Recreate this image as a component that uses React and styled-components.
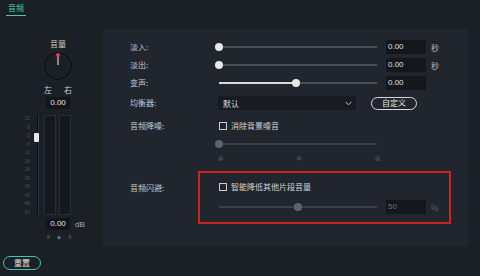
import React from 'react';
import styled, { createGlobalStyle } from 'styled-components';

const GlobalStyle = createGlobalStyle`
    html, body {
        margin: 0;
        padding: 0;
        background: #1b1f26;
    }
    * { box-sizing: border-box; }
`;

const Screen = styled.div`
    width: 480px;
    height: 276px;
    background: #1b1f26;
    font-family: "Noto Sans CJK SC", "Noto Sans", sans-serif;
    font-size: 8px;
    color: #c9ccd1;
    display: flex;
    flex-direction: column;
    overflow: hidden;
`;

const TabBar = styled.div`
    height: 20px;
    padding-left: 6px;
    display: flex;
    align-items: flex-start;
`;

const Tab = styled.div`
    margin-top: 3px;
    padding: 0 2px 2px;
    color: #4ec9ac;
    line-height: 10px;
    border-bottom: 1px solid #4ec9ac;
`;

const Main = styled.div`
    display: flex;
    padding-top: 9px;
    height: 226px;
`;

const LeftCol = styled.div`
    width: 103px;
    display: flex;
    flex-direction: column;
    align-items: flex-start;
    padding: 10px 0 0 12px;
`;

const Centered = styled.div`
    width: 92px;
    margin-left: -12px;
    display: flex;
    flex-direction: column;
    align-items: center;
    padding-left: 24px;
`;

const Caption = styled.div`
    line-height: 10px;
`;

const LR = styled.div`
    display: flex;
    gap: 12px;
    line-height: 10px;
    margin-top: 4px;
`;

const SmallBox = styled.div`
    width: 24px;
    height: 12px;
    background: #121519;
    color: #e2e4e7;
    line-height: 12px;
    text-align: center;
    font-family: "Liberation Sans", sans-serif;
    font-size: 8px;
`;

const Meter = styled.div`
    margin-top: 6px;
    display: flex;
    align-items: stretch;
    height: 100px;
`;

const Scale = styled.div`
    width: 18px;
    display: flex;
    flex-direction: column;
    justify-content: space-between;
    align-items: flex-end;
    font-family: "Liberation Sans", sans-serif;
    font-size: 5px;
    color: #4b5058;
    line-height: 6px;
`;

const Fader = styled.div`
    width: 14px;
    position: relative;
    display: flex;
    justify-content: center;
    &::before {
        content: '';
        width: 1px;
        background: #0b0d10;
        box-shadow: 1px 0 0 #2f343c;
    }
`;

const FaderThumb = styled.div`
    position: absolute;
    top: 18px;
    left: 4px;
    width: 5px;
    height: 9px;
    background: #e8e8e8;
    border-radius: 1px;
`;

const Bar = styled.div`
    width: 12px;
    margin-right: 3px;
    background: #15181d;
    border: 1px solid #2a2f37;
`;

const DbRow = styled.div`
    margin-top: 3px;
    display: flex;
    align-items: center;
    gap: 5px;
    padding-left: 34px;
`;

const Unit = styled.span`
    color: #a8acb2;
    font-family: "Liberation Sans", sans-serif;
    font-size: 8px;
`;

const PanRow = styled.div`
    margin-top: 4px;
    padding-left: 35px;
    display: flex;
    gap: 7px;
    font-size: 5px;
    color: #6b7078;
    font-family: "Liberation Sans", sans-serif;
`;

const Panel = styled.div`
    width: 365px;
    height: 217px;
    background: #21262e;
    padding: 9px 0 0 27px;
    display: flex;
    flex-direction: column;
`;

const Row = styled.div`
    display: grid;
    grid-template-columns: 88px 1fr;
    align-items: center;
    height: ${p => p.$h || 18}px;
    margin-top: ${p => p.$top || 0}px;
`;

const Label = styled.div`
    color: #c4c7cc;
    line-height: 10px;
`;

const Controls = styled.div`
    display: flex;
    align-items: center;
`;

const Track = styled.div`
    position: relative;
    width: 158px;
    height: 2px;
    background: ${p => p.$dim ? '#3b4048' : '#4a4f57'};
    margin-left: 1px;
`;

const Fill = styled.div`
    position: absolute;
    left: 0;
    top: 0;
    height: 2px;
    background: #d7d9dc;
`;

const Thumb = styled.div`
    position: absolute;
    top: -3px;
    width: 8px;
    height: 8px;
    margin-left: -4px;
    border-radius: 50%;
    background: ${p => p.$dim ? '#5e636b' : '#e6e7e9'};
`;

const Field = styled.div`
    width: 40px;
    height: 14px;
    margin-left: 9px;
    background: #14171c;
    color: ${p => p.$dim ? '#6a6f77' : '#dfe1e4'};
    font-family: "Liberation Sans", sans-serif;
    font-size: 8px;
    line-height: 14px;
    padding-left: 2px;
`;

const Suffix = styled.span`
    margin-left: 5px;
    color: ${p => p.$dim ? '#5c6169' : '#b4b7bc'};
    font-family: "Noto Sans CJK SC", "Liberation Sans", sans-serif;
    font-size: 8px;
`;

const Select = styled.div`
    width: 138px;
    height: 14px;
    background: #181b21;
    display: flex;
    align-items: center;
    justify-content: space-between;
    padding: 0 4px 0 5px;
    color: #dcdee1;
`;

const PillButton = styled.button`
    margin-left: 15px;
    width: 46px;
    height: 13px;
    border: 1px solid #d6d8db;
    border-radius: 7px;
    background: transparent;
    color: #e4e6e9;
    font-family: inherit;
    font-size: 8px;
    line-height: 10px;
    padding: 0;
`;

const Check = styled.label`
    display: flex;
    align-items: center;
    gap: 4px;
    margin-left: 1px;
    color: #d0d3d7;
    line-height: 10px;
    &::before {
        content: '';
        width: 6px;
        height: 6px;
        border: 1px solid #c9ccd1;
    }
`;

const Marks = styled.div`
    width: 162px;
    display: flex;
    justify-content: space-between;
    font-size: 5px;
    color: #5b6068;
    line-height: 6px;
`;

const Highlight = styled.div`
    margin-left: -20px;
    width: 253px;
    height: 53px;
    border: 2px solid #c8261c;
    padding: 9px 0 0 18px;
    display: flex;
    flex-direction: column;
    gap: 8px;
`;

const Footer = styled.div`
    flex: 1;
    display: flex;
    align-items: flex-start;
    padding: 10px 0 0 3px;
`;

const ResetButton = styled.button`
    width: 38px;
    height: 14px;
    border: 1.5px solid #48c4a6;
    border-radius: 8px;
    background: transparent;
    color: #e2e4e7;
    font-family: inherit;
    font-size: 8px;
    line-height: 10px;
    padding: 0;
`;

const Knob = () => (
    <svg width="30" height="30" viewBox="0 0 30 30" style={{ marginTop: 2 }}>
        <circle cx="15" cy="15" r="13.5" fill="#1b1f26" stroke="#0c0e12" strokeWidth="1.5" />
        <circle cx="15" cy="15" r="14.5" fill="none" stroke="#2c3139" strokeWidth="0.6" />
        <line x1="15" y1="4" x2="15" y2="14" stroke="#e9c6cf" strokeWidth="1.2" />
        <circle cx="15" cy="4" r="2" fill="#e0375a" />
    </svg>
);

const Chevron = () => (
    <svg width="7" height="5" viewBox="0 0 7 5">
        <path d="M0.5 0.8 L3.5 3.8 L6.5 0.8" fill="none" stroke="#c0c3c8" strokeWidth="1" />
    </svg>
);

const Slider = ({ value, filled, dim }) => (
    <Track $dim={dim}>
        {filled && <Fill style={{ width: `${value}%` }} />}
        <Thumb $dim={dim} style={{ left: `${value}%` }} />
    </Track>
);

const scale = ['12', '6', '0', '-6', '-12', '-18', '-24', '-30', '-36', '-42', '-48', '-54'];

const App = () => {
    return (
        <Screen>
            <GlobalStyle />
            <TabBar>
                <Tab>音频</Tab>
            </TabBar>
            <Main>
                <LeftCol>
                    <Centered>
                        <Caption>音量</Caption>
                        <Knob />
                        <LR><span>左</span><span>右</span></LR>
                        <div style={{ marginTop: 2 }}><SmallBox>0.00</SmallBox></div>
                    </Centered>
                    <Meter>
                        <Scale>
                            {scale.map(s => <span key={s}>{s}</span>)}
                        </Scale>
                        <Fader><FaderThumb /></Fader>
                        <Bar />
                        <Bar />
                    </Meter>
                    <DbRow>
                        <SmallBox>0.00</SmallBox>
                        <Unit>dB</Unit>
                    </DbRow>
                    <PanRow>
                        <span>K</span><span>◆</span><span>X</span>
                    </PanRow>
                </LeftCol>
                <Panel>
                    <Row>
                        <Label>淡入:</Label>
                        <Controls>
                            <Slider value={0} />
                            <Field>0.00</Field>
                            <Suffix>秒</Suffix>
                        </Controls>
                    </Row>
                    <Row>
                        <Label>淡出:</Label>
                        <Controls>
                            <Slider value={0} />
                            <Field>0.00</Field>
                            <Suffix>秒</Suffix>
                        </Controls>
                    </Row>
                    <Row>
                        <Label>变声:</Label>
                        <Controls>
                            <Slider value={49} filled />
                            <Field>0.00</Field>
                        </Controls>
                    </Row>
                    <Row $top={2}>
                        <Label>均衡器:</Label>
                        <Controls>
                            <Select><span>默认</span><Chevron /></Select>
                            <PillButton>自定义</PillButton>
                        </Controls>
                    </Row>
                    <Row $top={5}>
                        <Label>音频降噪:</Label>
                        <Controls>
                            <Check>消除背景噪音</Check>
                        </Controls>
                    </Row>
                    <Row>
                        <span />
                        <Controls>
                            <Slider value={0} dim />
                        </Controls>
                    </Row>
                    <Row $h={10} $top={0}>
                        <span />
                        <Marks><span>弱</span><span>中</span><span>强</span></Marks>
                    </Row>
                    <Row $h={53} $top={8}>
                        <Label style={{ alignSelf: 'start', marginTop: 12 }}>音频闪避:</Label>
                        <Highlight>
                            <Check>智能降低其他片段音量</Check>
                            <Controls>
                                <Slider value={50} dim />
                                <Field $dim>50</Field>
                                <Suffix $dim>%</Suffix>
                            </Controls>
                        </Highlight>
                    </Row>
                </Panel>
            </Main>
            <Footer>
                <ResetButton>重置</ResetButton>
            </Footer>
        </Screen>
    );
};

export default App;
